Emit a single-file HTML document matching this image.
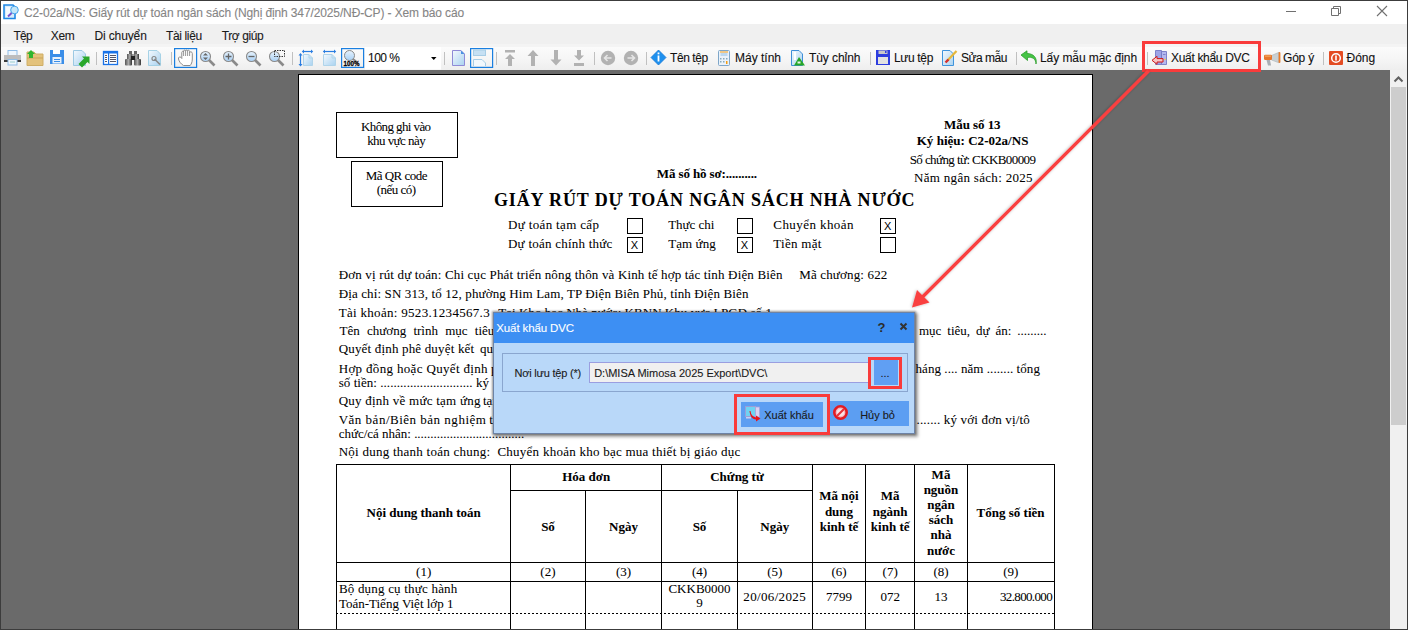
<!DOCTYPE html>
<html><head><meta charset="utf-8">
<style>
*{box-sizing:border-box;margin:0;padding:0}
html,body{width:1408px;height:630px;overflow:hidden;background:#fff}
body{position:relative;font-family:"Liberation Sans",sans-serif}
.a{position:absolute}
.t{position:absolute;white-space:pre}
.box{position:absolute;border:1px solid #000}
.sep{position:absolute;top:52px;width:1px;height:13px;background:#c4c4c4}
.hl{position:absolute;background:#000;height:1px}
.vl{position:absolute;background:#000;width:1px}
.dot{position:absolute;height:1px;background-image:linear-gradient(to right,#000 50%,transparent 50%);background-size:4px 1px}
</style></head>
<body>
<!-- window frame -->
<div class="a" style="left:0;top:0;width:1408px;height:630px;background:#fff"></div>
<!-- menu bar -->
<div class="a" style="left:1px;top:24px;width:1406px;height:20px;background:#f0f0f0"></div>
<div class="a" style="left:1px;top:44px;width:1406px;height:3px;background:#f4f4f4"></div>
<div class="a" style="left:1px;top:47px;width:1406px;height:23px;background:linear-gradient(#fbfbfb,#f6f6f6 50%,#eeeeee)"></div>
<!-- view area -->
<div class="a" style="left:1px;top:70px;width:1389px;height:560px;background:#6a6a6a"></div>
<!-- scrollbar -->
<div class="a" style="left:1390px;top:70px;width:17px;height:560px;background:#f0f0f0"></div>
<div class="a" style="left:1391px;top:87px;width:15px;height:338px;background:#cdcdcd"></div>
<svg class="a" style="left:1390px;top:70px" width="17" height="17"><path d="M4.5 11.5 L8.5 7.5 L12.5 11.5" fill="none" stroke="#606060" stroke-width="2"/></svg>
<!-- page -->
<div class="a" style="left:298px;top:74px;width:795px;height:570px;background:#fff;border:1px solid #000"></div>
<!-- window borders -->
<div class="a" style="left:0;top:0;width:1408px;height:1px;background:#3c3c3c"></div>
<div class="a" style="left:0;top:0;width:1px;height:630px;background:#3c3c3c"></div>
<div class="a" style="left:1407px;top:0;width:1px;height:630px;background:#3c3c3c"></div>
<div class="a" style="left:0;top:629px;width:1408px;height:1px;background:#3c3c3c"></div>

<!-- title bar icons -->
<svg class="a" style="left:3px;top:4px" width="16" height="16" viewBox="0 0 16 16">
 <path d="M1 1 H10 L12 3 V14.5 H1 Z" fill="#d8ebfb" stroke="#1f88e5" stroke-width="1.6"/>
 <rect x="3" y="3" width="4" height="10" fill="#f4f9fe"/>
 <circle cx="11.5" cy="6" r="3.8" fill="#c5e6f8" stroke="#49a6ea" stroke-width="1"/>
 <path d="M8.6 9 L5 12.5" stroke="#7a52cc" stroke-width="2"/>
</svg>
<svg class="a" style="left:1284px;top:8px" width="14" height="8"><rect x="2" y="3" width="10" height="1" fill="#707070"/></svg>
<svg class="a" style="left:1330px;top:5px" width="12" height="12"><path d="M1.5 3.5 H8.5 V10.5 H1.5 Z M3.5 3.5 V1.5 H10.5 V8.5 H8.5" fill="none" stroke="#707070" stroke-width="1"/></svg>
<svg class="a" style="left:1376px;top:5px" width="12" height="12"><path d="M1 1 L11 11 M11 1 L1 11" stroke="#707070" stroke-width="1.1"/></svg>


<!-- page boxes -->
<div class="box" style="left:336px;top:112px;width:122px;height:46px"></div>
<div class="box" style="left:351px;top:161px;width:92px;height:46px"></div>
<!-- checkboxes -->
<div class="box" style="left:627px;top:218px;width:16px;height:16px"></div>
<div class="box" style="left:627px;top:237px;width:16px;height:16px"></div>
<div class="box" style="left:737px;top:218px;width:16px;height:16px"></div>
<div class="box" style="left:737px;top:237px;width:16px;height:16px"></div>
<div class="box" style="left:880px;top:218px;width:16px;height:16px"></div>
<div class="box" style="left:880px;top:237px;width:16px;height:16px"></div>


<!-- table -->
<div class="hl" style="left:336px;top:464px;width:719px"></div>
<div class="hl" style="left:510px;top:490px;width:303px"></div>
<div class="hl" style="left:336px;top:562px;width:719px"></div>
<div class="hl" style="left:336px;top:581px;width:719px"></div>
<div class="dot" style="left:336px;top:613px;width:719px"></div>
<div class="vl" style="left:336px;top:464px;height:165px"></div>
<div class="vl" style="left:510px;top:464px;height:165px"></div>
<div class="vl" style="left:585px;top:490px;height:139px"></div>
<div class="vl" style="left:661px;top:464px;height:165px"></div>
<div class="vl" style="left:737px;top:490px;height:139px"></div>
<div class="vl" style="left:812px;top:464px;height:165px"></div>
<div class="vl" style="left:865px;top:464px;height:165px"></div>
<div class="vl" style="left:914px;top:464px;height:165px"></div>
<div class="vl" style="left:967px;top:464px;height:165px"></div>
<div class="vl" style="left:1054px;top:464px;height:165px"></div>



<div class="t" style="left:361.00px;top:120.00px;line-height:13px;font-family:'Liberation Serif', serif;font-size:13px;font-weight:400;color:#000;-webkit-text-stroke:0.05px #000;letter-spacing:-0.599px;">Không ghi vào</div>
<div class="t" style="left:367.20px;top:134.00px;line-height:13px;font-family:'Liberation Serif', serif;font-size:13px;font-weight:400;color:#000;-webkit-text-stroke:0.05px #000;letter-spacing:-0.563px;">khu vực này</div>
<div class="t" style="left:365.70px;top:169.00px;line-height:13px;font-family:'Liberation Serif', serif;font-size:13px;font-weight:400;color:#000;-webkit-text-stroke:0.05px #000;letter-spacing:-0.514px;">Mã QR code</div>
<div class="t" style="left:376.80px;top:183.00px;line-height:13px;font-family:'Liberation Serif', serif;font-size:13px;font-weight:400;color:#000;-webkit-text-stroke:0.05px #000;letter-spacing:-0.519px;">(nếu có)</div>
<div class="t" style="left:944.00px;top:118.00px;line-height:13px;font-family:'Liberation Serif', serif;font-size:13px;font-weight:700;color:#000;-webkit-text-stroke:0.05px #000;letter-spacing:-0.062px;">Mẫu số 13</div>
<div class="t" style="left:916.70px;top:134.00px;line-height:13px;font-family:'Liberation Serif', serif;font-size:13px;font-weight:700;color:#000;-webkit-text-stroke:0.05px #000;letter-spacing:0.026px;">Ký hiệu: C2-02a/NS</div>
<div class="t" style="left:909.70px;top:152.50px;line-height:13px;font-family:'Liberation Serif', serif;font-size:13px;font-weight:400;color:#000;-webkit-text-stroke:0.05px #000;letter-spacing:-0.590px;">Số chứng từ: CKKB00009</div>
<div class="t" style="left:914.00px;top:171.00px;line-height:13px;font-family:'Liberation Serif', serif;font-size:13px;font-weight:400;color:#000;-webkit-text-stroke:0.05px #000;letter-spacing:0.310px;">Năm ngân sách: 2025</div>
<div class="t" style="left:656.80px;top:167.00px;line-height:13px;font-family:'Liberation Serif', serif;font-size:13px;font-weight:700;color:#000;-webkit-text-stroke:0.05px #000;letter-spacing:-0.123px;">Mã số hồ sơ:..........</div>
<div class="t" style="left:494.00px;top:191.00px;line-height:18px;font-family:'Liberation Serif', serif;font-size:18px;font-weight:700;color:#000;-webkit-text-stroke:0.05px #000;letter-spacing:0.851px;">GIẤY RÚT DỰ TOÁN NGÂN SÁCH NHÀ NƯỚC</div>
<div class="t" style="left:508.00px;top:218.00px;line-height:13px;font-family:'Liberation Serif', serif;font-size:13px;font-weight:400;color:#000;-webkit-text-stroke:0.05px #000;letter-spacing:0.346px;">Dự toán tạm cấp</div>
<div class="t" style="left:508.00px;top:237.00px;line-height:13px;font-family:'Liberation Serif', serif;font-size:13px;font-weight:400;color:#000;-webkit-text-stroke:0.05px #000;letter-spacing:0.234px;">Dự toán chính thức</div>
<div class="t" style="left:668.20px;top:218.00px;line-height:13px;font-family:'Liberation Serif', serif;font-size:13px;font-weight:400;color:#000;-webkit-text-stroke:0.05px #000;letter-spacing:-0.036px;">Thực chi</div>
<div class="t" style="left:668.20px;top:237.00px;line-height:13px;font-family:'Liberation Serif', serif;font-size:13px;font-weight:400;color:#000;-webkit-text-stroke:0.05px #000;letter-spacing:0.068px;">Tạm ứng</div>
<div class="t" style="left:773.30px;top:218.00px;line-height:13px;font-family:'Liberation Serif', serif;font-size:13px;font-weight:400;color:#000;-webkit-text-stroke:0.05px #000;letter-spacing:0.428px;">Chuyển khoản</div>
<div class="t" style="left:773.30px;top:237.00px;line-height:13px;font-family:'Liberation Serif', serif;font-size:13px;font-weight:400;color:#000;-webkit-text-stroke:0.05px #000;letter-spacing:0.274px;">Tiền mặt</div>
<div class="t" style="left:630.80px;top:240.00px;line-height:11px;font-family:'Liberation Sans', sans-serif;font-size:11px;font-weight:400;color:#000;-webkit-text-stroke:0.05px #000;letter-spacing:-0.544px;-webkit-text-stroke:0">X</div>
<div class="t" style="left:740.80px;top:240.00px;line-height:11px;font-family:'Liberation Sans', sans-serif;font-size:11px;font-weight:400;color:#000;-webkit-text-stroke:0.05px #000;letter-spacing:-0.544px;-webkit-text-stroke:0">X</div>
<div class="t" style="left:884.00px;top:221.00px;line-height:11px;font-family:'Liberation Sans', sans-serif;font-size:11px;font-weight:400;color:#000;-webkit-text-stroke:0.05px #000;letter-spacing:-0.544px;-webkit-text-stroke:0">X</div>
<div class="t" style="left:338.70px;top:268.00px;line-height:13px;font-family:'Liberation Serif', serif;font-size:13px;font-weight:400;color:#000;-webkit-text-stroke:0.05px #000;letter-spacing:0.158px;">Đơn vị rút dự toán: Chi cục Phát triển nông thôn và Kinh tế hợp tác tỉnh Điện Biên</div>
<div class="t" style="left:799.20px;top:268.00px;line-height:13px;font-family:'Liberation Serif', serif;font-size:13px;font-weight:400;color:#000;-webkit-text-stroke:0.05px #000;letter-spacing:0.154px;">Mã chương: 622</div>
<div class="t" style="left:338.70px;top:287.00px;line-height:13px;font-family:'Liberation Serif', serif;font-size:13px;font-weight:400;color:#000;-webkit-text-stroke:0.05px #000;letter-spacing:0.128px;">Địa chỉ: SN 313, tổ 12, phường Him Lam, TP Điện Biên Phủ, tỉnh Điện Biên</div>
<div class="t" style="left:338.70px;top:305.50px;line-height:13px;font-family:'Liberation Serif', serif;font-size:13px;font-weight:400;color:#000;-webkit-text-stroke:0.05px #000;letter-spacing:0.303px;">Tài khoản: 9523.1234567.3</div>
<div class="t" style="left:498.20px;top:305.50px;line-height:13px;font-family:'Liberation Serif', serif;font-size:13px;font-weight:400;color:#000;-webkit-text-stroke:0.05px #000;letter-spacing:0.042px;">Tại Kho bạc Nhà nước: KBNN Khu vực I PGD số 1</div>
<div class="t" style="left:339.50px;top:324.00px;line-height:13px;font-family:'Liberation Serif', serif;font-size:13px;font-weight:400;color:#000;-webkit-text-stroke:0.05px #000;word-spacing:4px;">Tên chương trình mục tiêu</div>
<div class="t" style="left:919.00px;top:324.00px;line-height:13px;font-family:'Liberation Serif', serif;font-size:13px;font-weight:400;color:#000;-webkit-text-stroke:0.05px #000;word-spacing:2.697px;">mục tiêu, dự án: .........</div>
<div class="t" style="left:338.70px;top:342.00px;line-height:13px;font-family:'Liberation Serif', serif;font-size:13px;font-weight:400;color:#000;-webkit-text-stroke:0.05px #000;letter-spacing:0.174px;">Quyết định phê duyệt kết</div>
<div class="t" style="left:480.00px;top:342.00px;line-height:13px;font-family:'Liberation Serif', serif;font-size:13px;font-weight:400;color:#000;-webkit-text-stroke:0.05px #000;">quả lựa chọn nhà thầu</div>
<div class="t" style="left:338.70px;top:362.00px;line-height:13px;font-family:'Liberation Serif', serif;font-size:13px;font-weight:400;color:#000;-webkit-text-stroke:0.05px #000;letter-spacing:0.334px;">Hợp đồng hoặc Quyết định</div>
<div class="t" style="left:491.00px;top:362.00px;line-height:13px;font-family:'Liberation Serif', serif;font-size:13px;font-weight:400;color:#000;-webkit-text-stroke:0.05px #000;">phê duyệt số</div>
<div class="t" style="left:915.50px;top:362.00px;line-height:13px;font-family:'Liberation Serif', serif;font-size:13px;font-weight:400;color:#000;-webkit-text-stroke:0.05px #000;letter-spacing:0.064px;">háng .... năm ........ tổng</div>
<div class="t" style="left:338.70px;top:376.00px;line-height:13px;font-family:'Liberation Serif', serif;font-size:13px;font-weight:400;color:#000;-webkit-text-stroke:0.05px #000;letter-spacing:0.047px;">số tiền: ............................ ký</div>
<div class="t" style="left:338.70px;top:394.00px;line-height:13px;font-family:'Liberation Serif', serif;font-size:13px;font-weight:400;color:#000;-webkit-text-stroke:0.05px #000;letter-spacing:0.239px;">Quy định về mức tạm ứng</div>
<div class="t" style="left:482.90px;top:394.00px;line-height:13px;font-family:'Liberation Serif', serif;font-size:13px;font-weight:400;color:#000;-webkit-text-stroke:0.05px #000;">tại</div>
<div class="t" style="left:338.70px;top:412.50px;line-height:13px;font-family:'Liberation Serif', serif;font-size:13px;font-weight:400;color:#000;-webkit-text-stroke:0.05px #000;letter-spacing:0.504px;">Văn bản/Biên bản nghiệm</div>
<div class="t" style="left:489.30px;top:412.50px;line-height:13px;font-family:'Liberation Serif', serif;font-size:13px;font-weight:400;color:#000;-webkit-text-stroke:0.05px #000;">thu</div>
<div class="t" style="left:916.50px;top:412.50px;line-height:13px;font-family:'Liberation Serif', serif;font-size:13px;font-weight:400;color:#000;-webkit-text-stroke:0.05px #000;letter-spacing:0.169px;">....... ký với đơn vị/tô</div>
<div class="t" style="left:338.70px;top:427.00px;line-height:13px;font-family:'Liberation Serif', serif;font-size:13px;font-weight:400;color:#000;-webkit-text-stroke:0.05px #000;letter-spacing:-0.013px;">chức/cá nhân: ..................................</div>
<div class="t" style="left:338.70px;top:445.00px;line-height:13px;font-family:'Liberation Serif', serif;font-size:13px;font-weight:400;color:#000;-webkit-text-stroke:0.05px #000;letter-spacing:0.253px;">Nội dung thanh toán chung:  Chuyển khoản kho bạc mua thiết bị giáo dục</div>
<div class="t" style="left:562.18px;top:470.00px;line-height:13px;font-family:'Liberation Serif', serif;font-size:13px;font-weight:700;color:#000;-webkit-text-stroke:0.05px #000;">Hóa đơn</div>
<div class="t" style="left:710.23px;top:470.00px;line-height:13px;font-family:'Liberation Serif', serif;font-size:13px;font-weight:700;color:#000;-webkit-text-stroke:0.05px #000;">Chứng từ</div>
<div class="t" style="left:366.60px;top:506.00px;line-height:13px;font-family:'Liberation Serif', serif;font-size:13px;font-weight:700;color:#000;-webkit-text-stroke:0.05px #000;letter-spacing:-0.028px;">Nội dung thanh toán</div>
<div class="t" style="left:541.13px;top:519.50px;line-height:13px;font-family:'Liberation Serif', serif;font-size:13px;font-weight:700;color:#000;-webkit-text-stroke:0.05px #000;">Số</div>
<div class="t" style="left:609.05px;top:519.50px;line-height:13px;font-family:'Liberation Serif', serif;font-size:13px;font-weight:700;color:#000;-webkit-text-stroke:0.05px #000;">Ngày</div>
<div class="t" style="left:692.63px;top:519.50px;line-height:13px;font-family:'Liberation Serif', serif;font-size:13px;font-weight:700;color:#000;-webkit-text-stroke:0.05px #000;">Số</div>
<div class="t" style="left:760.35px;top:519.50px;line-height:13px;font-family:'Liberation Serif', serif;font-size:13px;font-weight:700;color:#000;-webkit-text-stroke:0.05px #000;">Ngày</div>
<div class="t" style="left:819.31px;top:489.00px;line-height:13px;font-family:'Liberation Serif', serif;font-size:13px;font-weight:700;color:#000;-webkit-text-stroke:0.05px #000;">Mã nội</div>
<div class="t" style="left:824.90px;top:504.60px;line-height:13px;font-family:'Liberation Serif', serif;font-size:13px;font-weight:700;color:#000;-webkit-text-stroke:0.05px #000;">dung</div>
<div class="t" style="left:819.67px;top:520.20px;line-height:13px;font-family:'Liberation Serif', serif;font-size:13px;font-weight:700;color:#000;-webkit-text-stroke:0.05px #000;">kinh tế</div>
<div class="t" style="left:880.81px;top:489.00px;line-height:13px;font-family:'Liberation Serif', serif;font-size:13px;font-weight:700;color:#000;-webkit-text-stroke:0.05px #000;">Mã</div>
<div class="t" style="left:872.85px;top:504.60px;line-height:13px;font-family:'Liberation Serif', serif;font-size:13px;font-weight:700;color:#000;-webkit-text-stroke:0.05px #000;">ngành</div>
<div class="t" style="left:870.87px;top:520.20px;line-height:13px;font-family:'Liberation Serif', serif;font-size:13px;font-weight:700;color:#000;-webkit-text-stroke:0.05px #000;">kinh tế</div>
<div class="t" style="left:931.61px;top:467.50px;line-height:13px;font-family:'Liberation Serif', serif;font-size:13px;font-weight:700;color:#000;-webkit-text-stroke:0.05px #000;">Mã</div>
<div class="t" style="left:923.65px;top:482.70px;line-height:13px;font-family:'Liberation Serif', serif;font-size:13px;font-weight:700;color:#000;-webkit-text-stroke:0.05px #000;">nguồn</div>
<div class="t" style="left:927.27px;top:497.90px;line-height:13px;font-family:'Liberation Serif', serif;font-size:13px;font-weight:700;color:#000;-webkit-text-stroke:0.05px #000;">ngân</div>
<div class="t" style="left:928.72px;top:513.10px;line-height:13px;font-family:'Liberation Serif', serif;font-size:13px;font-weight:700;color:#000;-webkit-text-stroke:0.05px #000;">sách</div>
<div class="t" style="left:930.52px;top:528.30px;line-height:13px;font-family:'Liberation Serif', serif;font-size:13px;font-weight:700;color:#000;-webkit-text-stroke:0.05px #000;">nhà</div>
<div class="t" style="left:927.00px;top:543.50px;line-height:13px;font-family:'Liberation Serif', serif;font-size:13px;font-weight:700;color:#000;-webkit-text-stroke:0.05px #000;">nước</div>
<div class="t" style="left:976.60px;top:505.50px;line-height:13px;font-family:'Liberation Serif', serif;font-size:13px;font-weight:700;color:#000;-webkit-text-stroke:0.05px #000;letter-spacing:0.008px;">Tổng số tiền</div>
<div class="t" style="left:416.06px;top:564.50px;line-height:13px;font-family:'Liberation Serif', serif;font-size:13px;font-weight:400;color:#000;-webkit-text-stroke:0.05px #000;">(1)</div>
<div class="t" style="left:540.36px;top:564.50px;line-height:13px;font-family:'Liberation Serif', serif;font-size:13px;font-weight:400;color:#000;-webkit-text-stroke:0.05px #000;">(2)</div>
<div class="t" style="left:615.96px;top:564.50px;line-height:13px;font-family:'Liberation Serif', serif;font-size:13px;font-weight:400;color:#000;-webkit-text-stroke:0.05px #000;">(3)</div>
<div class="t" style="left:691.91px;top:564.50px;line-height:13px;font-family:'Liberation Serif', serif;font-size:13px;font-weight:400;color:#000;-webkit-text-stroke:0.05px #000;">(4)</div>
<div class="t" style="left:767.21px;top:564.50px;line-height:13px;font-family:'Liberation Serif', serif;font-size:13px;font-weight:400;color:#000;-webkit-text-stroke:0.05px #000;">(5)</div>
<div class="t" style="left:831.46px;top:564.50px;line-height:13px;font-family:'Liberation Serif', serif;font-size:13px;font-weight:400;color:#000;-webkit-text-stroke:0.05px #000;">(6)</div>
<div class="t" style="left:882.56px;top:564.50px;line-height:13px;font-family:'Liberation Serif', serif;font-size:13px;font-weight:400;color:#000;-webkit-text-stroke:0.05px #000;">(7)</div>
<div class="t" style="left:933.41px;top:564.50px;line-height:13px;font-family:'Liberation Serif', serif;font-size:13px;font-weight:400;color:#000;-webkit-text-stroke:0.05px #000;">(8)</div>
<div class="t" style="left:1003.26px;top:564.50px;line-height:13px;font-family:'Liberation Serif', serif;font-size:13px;font-weight:400;color:#000;-webkit-text-stroke:0.05px #000;">(9)</div>
<div class="t" style="left:338.90px;top:582.00px;line-height:13px;font-family:'Liberation Serif', serif;font-size:13px;font-weight:400;color:#000;-webkit-text-stroke:0.05px #000;letter-spacing:0.198px;">Bộ dụng cụ thực hành</div>
<div class="t" style="left:338.90px;top:597.00px;line-height:13px;font-family:'Liberation Serif', serif;font-size:13px;font-weight:400;color:#000;-webkit-text-stroke:0.05px #000;">Toán-Tiếng Việt lớp 1</div>
<div class="t" style="left:668.44px;top:581.50px;line-height:13px;font-family:'Liberation Serif', serif;font-size:13px;font-weight:400;color:#000;-webkit-text-stroke:0.05px #000;">CKKB0000</div>
<div class="t" style="left:696.25px;top:596.00px;line-height:13px;font-family:'Liberation Serif', serif;font-size:13px;font-weight:400;color:#000;-webkit-text-stroke:0.05px #000;">9</div>
<div class="t" style="left:743.30px;top:589.50px;line-height:13px;font-family:'Liberation Serif', serif;font-size:13px;font-weight:400;color:#000;-webkit-text-stroke:0.05px #000;letter-spacing:0.347px;">20/06/2025</div>
<div class="t" style="left:826.00px;top:589.50px;line-height:13px;font-family:'Liberation Serif', serif;font-size:13px;font-weight:400;color:#000;-webkit-text-stroke:0.05px #000;">7799</div>
<div class="t" style="left:880.45px;top:589.50px;line-height:13px;font-family:'Liberation Serif', serif;font-size:13px;font-weight:400;color:#000;-webkit-text-stroke:0.05px #000;">072</div>
<div class="t" style="left:934.50px;top:589.50px;line-height:13px;font-family:'Liberation Serif', serif;font-size:13px;font-weight:400;color:#000;-webkit-text-stroke:0.05px #000;">13</div>
<div class="t" style="left:1000.00px;top:589.50px;line-height:13px;font-family:'Liberation Serif', serif;font-size:13px;font-weight:400;color:#000;-webkit-text-stroke:0.05px #000;letter-spacing:-0.650px;">32.800.000</div>
<!-- dialog -->
<div class="a" style="left:493px;top:312px;width:422px;height:122px;background:#b9d8f9;border:1px solid #6d83a6;box-shadow:0 0 2px 1px rgba(0,0,0,.35),2px 2px 3px 1px rgba(0,0,0,.35)"></div>
<div class="a" style="left:494px;top:313px;width:420px;height:30px;background:#3d8ff3"></div>
<div class="a" style="left:502px;top:353px;width:406px;height:39px;border:1px solid #8aa6cf"></div>
<div class="a" style="left:589px;top:362px;width:280px;height:21px;background:#f0f0f0;border:1px solid #9a9ee0"></div>
<div class="a" style="left:874px;top:360px;width:24px;height:25px;background:#609ff3"></div>
<div class="a" style="left:741px;top:402px;width:82px;height:25px;background:#5c9ef2"></div>
<div class="a" style="left:830px;top:401px;width:79px;height:25px;background:#5c9ef2"></div>
<svg class="a" style="left:877px;top:320px" width="34" height="14" viewBox="0 0 34 14">
 <text x="0.5" y="11.5" font-family="Liberation Sans" font-weight="700" font-size="13" fill="#2b2b2b">?</text>
 <path d="M23.5 3.5 L29.5 9.5 M29.5 3.5 L23.5 9.5" stroke="#333" stroke-width="2"/>
</svg>
<svg class="a" style="left:0;top:0" width="1408" height="630">
 <!-- xuat khau icon -->
 <rect x="745.5" y="406.5" width="10" height="10" fill="#6fd3f2" stroke="#9a9fd8"/>
 <rect x="755.5" y="407" width="4" height="10" fill="#d9d2f2" stroke="#a9a2dc" stroke-width="0.8"/>
 <rect x="746" y="417" width="5" height="1.5" fill="#c9cdf0"/>
 <path d="M750.5 411 C751 415 753 417 756 417.5 V415.5 L760.5 418.5 L756 421.5 V419.5 C752 419 750 416 749.5 411 Z" fill="#e8141a"/>
 <!-- huy bo icon -->
 <circle cx="840.5" cy="412.5" r="6.2" fill="#f4b8c0" stroke="#e31b23" stroke-width="2.6"/>
 <circle cx="840.5" cy="412.5" r="3.6" fill="#fbe3e6"/>
 <path d="M837 416 L844 409" stroke="#e8323a" stroke-width="2.2"/>
</svg>

<div class="t" style="left:496.30px;top:323.00px;line-height:11.5px;font-family:'Liberation Sans', sans-serif;font-size:11.5px;font-weight:400;color:#ffffff;-webkit-text-stroke:0.1px #ffffff;letter-spacing:-0.120px;">Xuất khẩu DVC</div>
<div class="t" style="left:514.40px;top:368.00px;line-height:11px;font-family:'Liberation Sans', sans-serif;font-size:11px;font-weight:400;color:#1a1a1a;-webkit-text-stroke:0.1px #1a1a1a;letter-spacing:-0.200px;">Nơi lưu tệp (*)</div>
<div class="t" style="left:594.20px;top:368.00px;line-height:11px;font-family:'Liberation Sans', sans-serif;font-size:11px;font-weight:400;color:#1a1a1a;-webkit-text-stroke:0.1px #1a1a1a;letter-spacing:-0.014px;">D:\MISA Mimosa 2025 Export\DVC\</div>
<div class="t" style="left:880.41px;top:368.00px;line-height:11px;font-family:'Liberation Sans', sans-serif;font-size:11px;font-weight:400;color:#1a1a1a;-webkit-text-stroke:0.1px #1a1a1a;">...</div>
<div class="t" style="left:764.20px;top:410.00px;line-height:11px;font-family:'Liberation Sans', sans-serif;font-size:11px;font-weight:400;color:#1a1a1a;-webkit-text-stroke:0.1px #1a1a1a;letter-spacing:0.017px;">Xuất khẩu</div>
<div class="t" style="left:860.20px;top:409.50px;line-height:11px;font-family:'Liberation Sans', sans-serif;font-size:11px;font-weight:400;color:#1a1a1a;-webkit-text-stroke:0.1px #1a1a1a;letter-spacing:-0.010px;">Hủy bỏ</div>
<!-- TOOLBAR ICONS -->
<!-- toolbar icons -->
<svg class="a" style="left:0;top:44px" width="1408" height="26" viewBox="0 44 1408 26">
 <defs>
  <linearGradient id="pg" x1="0" y1="0" x2="1" y2="1"><stop offset="0" stop-color="#f4f9fe"/><stop offset="1" stop-color="#a9d2f0"/></linearGradient>
  <linearGradient id="mg" x1="0" y1="0" x2="0" y2="1"><stop offset="0" stop-color="#e8f3fd"/><stop offset="1" stop-color="#a8d0f5"/></linearGradient>
  <linearGradient id="bin" x1="0" y1="0" x2="1" y2="0"><stop offset="0" stop-color="#555"/><stop offset=".5" stop-color="#aaa"/><stop offset="1" stop-color="#333"/></linearGradient>
 </defs>
 <!-- separators -->
 <g fill="#c0c0c0">
  <rect x="96" y="52" width="1" height="13"/><rect x="171" y="52" width="1" height="13"/><rect x="292" y="52" width="1" height="13"/>
  <rect x="444" y="52" width="1" height="13"/><rect x="496" y="52" width="1" height="13"/><rect x="594" y="52" width="1" height="13"/>
  <rect x="646" y="52" width="1" height="13"/><rect x="870" y="52" width="1" height="13"/><rect x="1016" y="52" width="1" height="13"/>
  <rect x="1147" y="52" width="1" height="13"/><rect x="1323" y="52" width="1" height="13"/>
 </g>
 <!-- printer -->
 <rect x="8" y="50.5" width="9" height="5" fill="#eef6fd" stroke="#8fbce6"/>
 <rect x="4" y="55" width="17" height="6" fill="#bdbdbd"/>
 <rect x="4" y="60" width="17" height="2" fill="#3a3a3a"/>
 <rect x="8" y="59.5" width="9" height="5.5" fill="#eef6fd" stroke="#8fbce6"/>
 <rect x="10" y="61.5" width="5" height="1" fill="#9cc"/>
 <!-- folder -->
 <path d="M27 52 H34 L36 54 H43 V65.5 H27 Z" fill="#e3c27c" stroke="#cfae66"/>
 <path d="M27 58 H43" stroke="#c9a35a"/>
 <path d="M31 50 L35 54 H33 V58 H29 V54 H27 Z" fill="#2fb52f"/>
 <!-- floppy -->
 <rect x="50" y="50" width="14" height="14" fill="#3b8ee8"/>
 <rect x="53" y="50" width="7" height="4" fill="#fff"/>
 <rect x="52.5" y="57" width="9" height="6.5" fill="#e9f2fb"/>
 <rect x="54" y="59" width="6" height="1" fill="#3b8ee8"/><rect x="54" y="61" width="6" height="1" fill="#3b8ee8"/>
 <!-- export page -->
 <path d="M73.5 50.5 H82 L85.5 54 V65.5 H73.5 Z" fill="url(#pg)" stroke="#9cc9e3"/>
 <path d="M78.5 64 L84 58.5 L82 56.5 H89.5 V64 L87.5 62 L82 67.5 Z" fill="#2aa82a"/>
 <!-- list -->
 <rect x="103.5" y="51.5" width="14" height="13" fill="#fff" stroke="#1a73e8" stroke-width="1.3"/>
 <rect x="103" y="51" width="15" height="2.5" fill="#1a73e8"/>
 <rect x="108" y="53" width="1.2" height="12" fill="#1a73e8"/>
 <g fill="#556"><rect x="105" y="55" width="2" height="1"/><rect x="105" y="57" width="2" height="1"/><rect x="105" y="59" width="2" height="1"/><rect x="105" y="61" width="2" height="1"/>
 <rect x="110" y="55" width="6" height="1"/><rect x="110" y="57" width="6" height="1"/><rect x="110" y="59" width="6" height="1"/><rect x="110" y="61" width="6" height="1"/></g>
 <!-- binoculars -->
 <rect x="129" y="51" width="3" height="4" fill="#666"/><rect x="134" y="51" width="3" height="4" fill="#666"/>
 <rect x="127" y="54" width="5.5" height="6" fill="url(#bin)"/><rect x="133.5" y="54" width="5.5" height="6" fill="url(#bin)"/>
 <rect x="125" y="59" width="7" height="6.5" rx="1" fill="url(#bin)"/><rect x="134" y="59" width="7" height="6.5" rx="1" fill="url(#bin)"/>
 <rect x="131" y="56" width="4" height="4" fill="#222"/>
 <!-- page wrench -->
 <path d="M148.5 50.5 H157 L160.5 54 V65.5 H148.5 Z" fill="url(#pg)" stroke="#a6d2e6"/>
 <path d="M154.5 59 L160 64.5" stroke="#888" stroke-width="1.6"/>
 <circle cx="154" cy="58.5" r="2" fill="none" stroke="#888" stroke-width="1.2"/>
 <!-- hand selected -->
 <rect x="174.6" y="48.6" width="22" height="18.8" fill="none" stroke="#1a7fe0" stroke-width="1.2"/>
 <path d="M183.5 65.5 C181 64 179 61.5 178.5 59 C178.2 57 180 56.3 181 57.5 L181.8 58.5 V52.5 C181.8 51 183.6 51 183.6 52 V51 C183.6 49.8 185.6 49.8 185.6 51 C185.6 49.8 187.6 49.8 187.6 51 C187.6 50 189.6 50 189.6 51.5 V52.5 C190 51.5 192.3 51.5 192.3 53.5 V59 C192.3 62.5 191.2 64 190.2 65.5 Z" fill="#fff" stroke="#8c8c8c" stroke-width="1"/>
 <path d="M183.6 52 V56 M185.6 51 V56 M187.6 51 V56 M189.6 52 V56" stroke="#8c8c8c" stroke-width="0.9"/>
 <!-- magnifiers -->
 <g stroke="#8a8a8a" stroke-width="1.1">
  <circle cx="205.5" cy="56.5" r="5" fill="url(#mg)"/><path d="M209 60 L214.5 65.5" stroke-width="2.6"/>
  <circle cx="228.5" cy="56.5" r="5" fill="url(#mg)"/><path d="M232 60 L237.5 65.5" stroke-width="2.6"/>
  <circle cx="251.5" cy="56.5" r="5" fill="url(#mg)"/><path d="M255 60 L260.5 65.5" stroke-width="2.6"/>
  <circle cx="274.5" cy="56.5" r="5" fill="url(#mg)"/><path d="M278 60 L283.5 65.5" stroke-width="2.6"/>
 </g>
 <path d="M205.5 53 L203 55.5 H208 Z M205.5 60 L203 57.5 H208 Z" fill="#666"/>
 <path d="M225.5 56.5 H231.5 M228.5 53.5 V59.5" stroke="#666" stroke-width="1.3"/>
 <path d="M248.5 56.5 H254.5" stroke="#666" stroke-width="1.3"/>
 <rect x="274.5" y="50.5" width="10" height="6" fill="none" stroke="#333" stroke-width="1" stroke-dasharray="1.5 1"/>
 <!-- fit page -->
 <rect x="299.9" y="54.5" width="1.2" height="11" fill="#2a7de1"/>
 <path d="M300.5 53 L298.5 55.5 H302.5 Z M300.5 66.5 L298.5 64 H302.5 Z" fill="#2a7de1"/>
 <rect x="303" y="50.9" width="9" height="1.2" fill="#2a7de1"/>
 <path d="M301.8 51.5 L304 49.5 V53.5 Z M313.2 51.5 L311 49.5 V53.5 Z" fill="#2a7de1"/>
 <path d="M303.5 54.5 H309 L312.5 58 V65.5 H303.5 Z" fill="url(#pg)" stroke="#b0d4ea"/>
 <path d="M309 54.5 V58 H312.5" fill="none" stroke="#b0d4ea"/>
 <!-- fit width -->
 <rect x="324" y="50.9" width="11" height="1.2" fill="#2a7de1"/>
 <path d="M322.8 51.5 L325 49.5 V53.5 Z M336.2 51.5 L334 49.5 V53.5 Z" fill="#2a7de1"/>
 <path d="M323.5 54.5 H332 L335.5 58 V65.5 H323.5 Z" fill="url(#pg)" stroke="#b0d4ea"/>
 <path d="M332 54.5 V58 H335.5" fill="none" stroke="#b0d4ea"/>
 <!-- 100% selected -->
 <rect x="341.6" y="48.6" width="22" height="18.8" fill="none" stroke="#1a7fe0" stroke-width="1.2"/>
 <circle cx="349.5" cy="55.5" r="5" fill="url(#mg)" stroke="#8a8a8a" stroke-width="1"/>
 <path d="M353 59 L358 63" stroke="#8a8a8a" stroke-width="2"/>
 <text x="343.5" y="66" font-family="Liberation Sans" font-weight="700" font-size="8" fill="#000" textLength="16" lengthAdjust="spacingAndGlyphs" stroke="#000" stroke-width="0.3">100%</text>
 <!-- combo dropdown -->
 <rect x="365" y="47" width="76" height="22.5" fill="#ffffff"/>
 <path d="M431 57 H436.5 L433.75 60 Z" fill="#000"/>
 <!-- single page -->
 <path d="M452.5 50.5 H461 L464.5 54 V65.5 H452.5 Z" fill="url(#pg)" stroke="#8f8ad6"/>
 <path d="M461 50.5 L464.5 54 H461 Z" fill="#4a90e2"/>
 <!-- continuous selected -->
 <rect x="470.6" y="48.6" width="22" height="18.8" fill="none" stroke="#1a7fe0" stroke-width="1.2"/>
 <rect x="473.5" y="50" width="12" height="5.5" fill="#c6e0f3" stroke="#a7cde6"/>
 <path d="M473.5 66 V59.5 H482 L485.5 63 V66" fill="#f2f8fd" stroke="#a7cde6"/>
 <!-- nav arrows gray -->
 <g fill="#b2b2b2">
  <rect x="505" y="50" width="10" height="2.5"/><path d="M510 54 L515 59 H512 V66 H508 V59 H505 Z"/>
  <path d="M533 50 L538.5 56 H535 V66 H531 V56 H527.5 Z"/>
  <path d="M556 65.5 L561.5 59.5 H558 V50 H554 V59.5 H550.5 Z"/>
  <path d="M579 60.5 L584 55.5 H581 V50 H577 V55.5 H574 Z"/><rect x="574" y="63" width="10" height="3"/>
  <circle cx="608" cy="58" r="7.2"/><circle cx="631" cy="58" r="7.2"/>
 </g>
 <path d="M611.5 58 H604.5 M607.5 55 L604.5 58 L607.5 61" stroke="#e6e6e6" stroke-width="1.6" fill="none"/>
 <path d="M627.5 58 H634.5 M631.5 55 L634.5 58 L631.5 61" stroke="#e6e6e6" stroke-width="1.6" fill="none"/>
 <!-- info diamond -->
 <path d="M658.5 50 L666 57.5 L658.5 65 L651 57.5 Z" fill="#1e90ee" stroke="#1576d4" stroke-width="0.8"/>
 <rect x="657.6" y="52.5" width="1.8" height="1.8" fill="#fff"/><rect x="657.6" y="55.5" width="1.8" height="6" fill="#fff"/>
 <!-- calculator -->
 <rect x="718.5" y="50.5" width="11" height="15" rx="1" fill="#eaf2fa" stroke="#7ea6c9"/>
 <rect x="720" y="51.5" width="8" height="1" fill="#f39c12"/>
 <rect x="720.5" y="53" width="7" height="3" fill="#bcd8f0"/>
 <g fill="#8ab"><rect x="720" y="58" width="1.5" height="1.5"/><rect x="723" y="58" width="1.5" height="1.5"/><rect x="726" y="58" width="1.5" height="1.5"/><rect x="720" y="61" width="1.5" height="1.5"/><rect x="723" y="61" width="1.5" height="1.5"/></g>
 <rect x="726" y="61" width="1.5" height="3" fill="#f39c12"/>
 <!-- tuy chinh -->
 <path d="M791.5 50.5 H799 L802.5 54 V65.5 H791.5 Z" fill="url(#pg)" stroke="#3f8fd8"/>
 <rect x="794" y="52" width="2" height="8" fill="#fff"/>
 <path d="M794 65.5 L799 57 L805 65.5 Z" fill="#27a627"/><rect x="797.5" y="61.5" width="3" height="2" fill="#e8f5e8"/>
 <!-- luu tep floppy -->
 <rect x="876" y="50" width="14" height="15" fill="#2d3ddf"/>
 <rect x="878.5" y="50.5" width="9" height="3.5" fill="#c9c9c9"/><rect x="885" y="51" width="1.5" height="2" fill="#2d3ddf"/>
 <rect x="878" y="57" width="10" height="7" fill="#e2e2e2"/>
 <!-- sua mau -->
 <path d="M942.5 50.5 H950 L953.5 54 V65.5 H942.5 Z" fill="url(#pg)" stroke="#3f94dc"/>
 <path d="M947 61 L956.5 51" stroke="#e5b73b" stroke-width="2.2"/>
 <path d="M945.5 62.5 L948.5 59.5" stroke="#d23030" stroke-width="2.4"/>
 <!-- lay mau green arrow -->
 <path d="M1036 64 C1036 59 1032 56.5 1027.5 57.5 V60.5 L1021 55 L1027 50.8 V53.5 C1033 53.5 1037.5 57.5 1036 64 Z" fill="#45c445" stroke="#2f9e2f" stroke-width="0.8"/>
 <!-- DVC icon -->
 <path d="M1155.5 50.5 H1161.5 L1161.5 64.5 H1155.5 Z" fill="#9ea3e6" stroke="#7479c4" stroke-width="0.9"/>
 <path d="M1161.5 51.5 H1166.5 V64.5 H1161.5 Z" fill="#b3b8ee" stroke="#7479c4" stroke-width="0.9"/>
 <rect x="1163" y="54" width="2.5" height="1" fill="#7c82cc"/>
 <circle cx="1165.3" cy="59.5" r="0.8" fill="#f2d23c"/>
 <path d="M1152 60.3 L1157 56.3 V58.6 H1163 V62 H1157 V64.3 Z" fill="#f7c4c4" stroke="#d01818" stroke-width="1"/>
 <!-- megaphone -->
 <path d="M1271.5 55.5 L1279 52.3 V62.8 L1271.5 60 Z" fill="#c9d0d3" stroke="#a9b2b6" stroke-width="0.6"/>
 <rect x="1278.6" y="52" width="1.8" height="11" rx="0.9" fill="#e87a2a"/>
 <rect x="1264" y="54.7" width="8" height="5.3" rx="1.2" fill="#e6762b"/>
 <rect x="1265" y="55.5" width="6" height="1.3" fill="#f3a55d"/>
 <path d="M1266.5 60 H1270 L1271 65.5 H1268 Z" fill="#a9aeb4"/>
 <!-- dong -->
 <rect x="1329" y="51" width="14" height="14" rx="1" fill="#e34b22"/>
 <circle cx="1336" cy="58" r="4.3" fill="none" stroke="#fff" stroke-width="1.5"/>
 <rect x="1335.2" y="55.5" width="1.6" height="5" fill="#fff"/>
</svg>


<div class="t" style="left:24.00px;top:7.00px;line-height:12px;font-family:'Liberation Sans', sans-serif;font-size:12px;font-weight:400;color:#858585;-webkit-text-stroke:0.1px #858585;letter-spacing:-0.123px;-webkit-text-stroke:0.1px #858585;">C2-02a/NS: Giấy rút dự toán ngân sách (Nghị định 347/2025/NĐ-CP) - Xem báo cáo</div>
<div class="t" style="left:13.50px;top:30.00px;line-height:12px;font-family:'Liberation Sans', sans-serif;font-size:12px;font-weight:400;color:#1a1a1a;-webkit-text-stroke:0.1px #1a1a1a;letter-spacing:-0.796px;">Tệp</div>
<div class="t" style="left:50.70px;top:30.00px;line-height:12px;font-family:'Liberation Sans', sans-serif;font-size:12px;font-weight:400;color:#1a1a1a;-webkit-text-stroke:0.1px #1a1a1a;letter-spacing:-0.263px;">Xem</div>
<div class="t" style="left:94.40px;top:30.00px;line-height:12px;font-family:'Liberation Sans', sans-serif;font-size:12px;font-weight:400;color:#1a1a1a;-webkit-text-stroke:0.1px #1a1a1a;letter-spacing:-0.119px;">Di chuyển</div>
<div class="t" style="left:166.00px;top:30.00px;line-height:12px;font-family:'Liberation Sans', sans-serif;font-size:12px;font-weight:400;color:#1a1a1a;-webkit-text-stroke:0.1px #1a1a1a;letter-spacing:-0.361px;">Tài liệu</div>
<div class="t" style="left:221.70px;top:30.00px;line-height:12px;font-family:'Liberation Sans', sans-serif;font-size:12px;font-weight:400;color:#1a1a1a;-webkit-text-stroke:0.1px #1a1a1a;letter-spacing:-0.385px;">Trợ giúp</div>
<div class="t" style="left:368.00px;top:52.00px;line-height:12px;font-family:'Liberation Sans', sans-serif;font-size:12px;font-weight:400;color:#111;-webkit-text-stroke:0.1px #111;letter-spacing:-0.546px;">100 %</div>
<div class="t" style="left:670.00px;top:52.00px;line-height:12px;font-family:'Liberation Sans', sans-serif;font-size:12px;font-weight:400;color:#111;-webkit-text-stroke:0.1px #111;letter-spacing:-0.415px;">Tên tệp</div>
<div class="t" style="left:735.00px;top:52.00px;line-height:12px;font-family:'Liberation Sans', sans-serif;font-size:12px;font-weight:400;color:#111;-webkit-text-stroke:0.1px #111;letter-spacing:-0.004px;">Máy tính</div>
<div class="t" style="left:809.00px;top:52.00px;line-height:12px;font-family:'Liberation Sans', sans-serif;font-size:12px;font-weight:400;color:#111;-webkit-text-stroke:0.1px #111;letter-spacing:-0.070px;">Tùy chỉnh</div>
<div class="t" style="left:894.00px;top:52.00px;line-height:12px;font-family:'Liberation Sans', sans-serif;font-size:12px;font-weight:400;color:#111;-webkit-text-stroke:0.1px #111;letter-spacing:-0.344px;">Lưu tệp</div>
<div class="t" style="left:961.00px;top:52.00px;line-height:12px;font-family:'Liberation Sans', sans-serif;font-size:12px;font-weight:400;color:#111;-webkit-text-stroke:0.1px #111;letter-spacing:-0.484px;">Sửa mẫu</div>
<div class="t" style="left:1040.00px;top:52.00px;line-height:12px;font-family:'Liberation Sans', sans-serif;font-size:12px;font-weight:400;color:#111;-webkit-text-stroke:0.1px #111;letter-spacing:-0.066px;">Lấy mẫu mặc định</div>
<div class="t" style="left:1171.00px;top:52.00px;line-height:12px;font-family:'Liberation Sans', sans-serif;font-size:12px;font-weight:400;color:#111;-webkit-text-stroke:0.1px #111;letter-spacing:-0.325px;">Xuất khẩu DVC</div>
<div class="t" style="left:1283.00px;top:52.00px;line-height:12px;font-family:'Liberation Sans', sans-serif;font-size:12px;font-weight:400;color:#111;-webkit-text-stroke:0.1px #111;letter-spacing:-0.203px;">Góp ý</div>
<div class="t" style="left:1346.60px;top:52.00px;line-height:12px;font-family:'Liberation Sans', sans-serif;font-size:12px;font-weight:400;color:#111;-webkit-text-stroke:0.1px #111;letter-spacing:-0.072px;">Đóng</div>
<!-- annotations -->
<div class="a" style="left:1142px;top:41px;width:119px;height:31px;border:3px solid #f93b3b"></div>
<div class="a" style="left:868px;top:357px;width:34px;height:32px;border:3px solid #f93b3b"></div>
<div class="a" style="left:734px;top:394px;width:96px;height:41px;border:3px solid #f93b3b"></div>
<svg class="a" style="left:0;top:0" width="1408" height="630">
 <defs><filter id="sh" x="-10%" y="-10%" width="120%" height="120%"><feDropShadow dx="-0.5" dy="0" stdDeviation="1.6" flood-color="#000" flood-opacity="0.3"/></filter></defs>
 <g filter="url(#sh)">
  <path d="M1148.5 71 L920 299.5" stroke="#f93f3f" stroke-width="3.3" fill="none"/>
  <path d="M912 307.5 L917 290 L929.5 302.5 Z" fill="#f93f3f"/>
 </g>
</svg>

</body></html>
